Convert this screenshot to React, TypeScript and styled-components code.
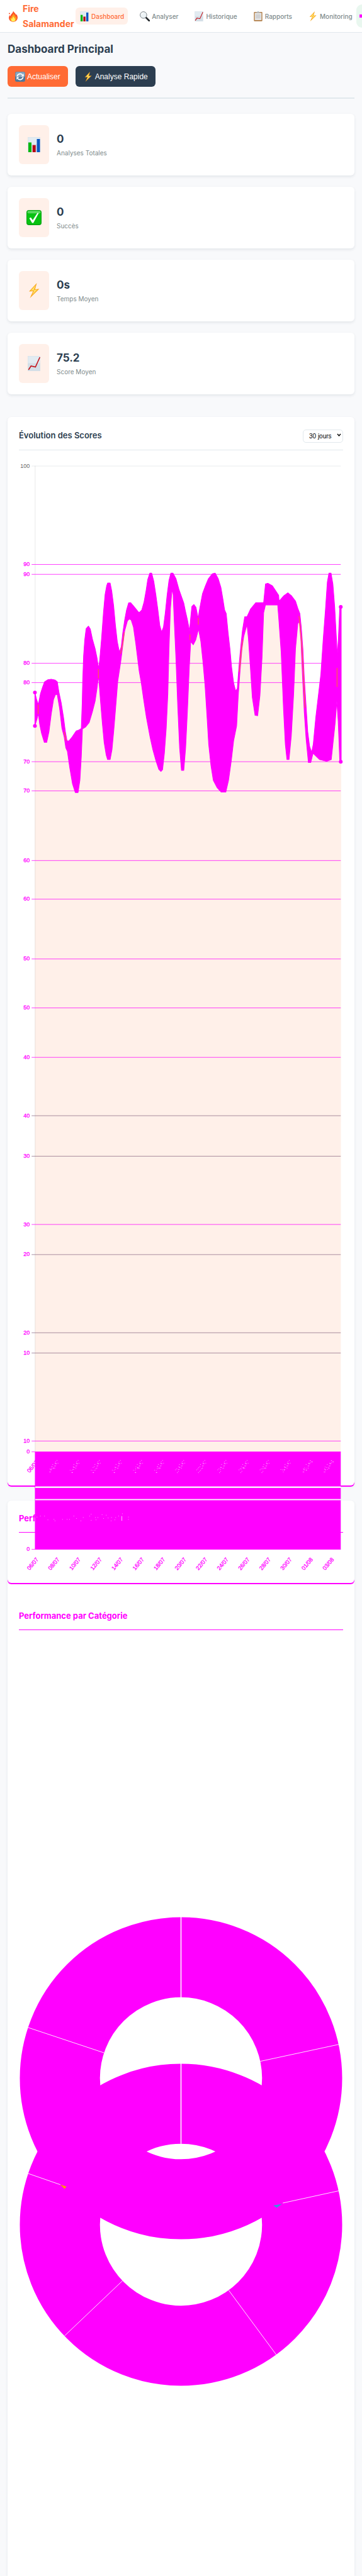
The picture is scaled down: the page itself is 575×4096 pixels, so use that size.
import React from "react";
import styled, { createGlobalStyle } from "styled-components";

const MAGENTA = "#ff00ff";
const ORANGE = "#ff6b35";
const NAVY = "#2c3e50";
const GREY = "#7f8c8d";
const PEACH = "#fff0e9";
const LINE = "#e1e8ed";

const GlobalStyle = createGlobalStyle`
  *, *::before, *::after { box-sizing: border-box; }
  body {
    margin: 0;
    background: #f8f9fb;
    color: ${NAVY};
    font-family: Inter, "Liberation Sans", sans-serif;
  }
`;

const Page = styled.div`
  min-height: 100vh;
  display: flex;
  flex-direction: column;
`;

const Header = styled.header`
  display: flex;
  align-items: center;
  height: 52px;
  padding-left: 12px;
  background: #fff;
  border-bottom: 1px solid ${LINE};
`;

const Brand = styled.a`
  flex: 0 0 108px;
  display: flex;
  align-items: center;
  gap: 6px;
  color: ${ORANGE};
  font-size: 14px;
  line-height: 24px;
  font-weight: 700;
  text-decoration: none;

  svg { flex: none; }
`;

const Nav = styled.nav`
  flex: none;
  display: flex;
  gap: 13px;
`;

const NavLink = styled.a<{ $active?: boolean }>`
  display: flex;
  align-items: center;
  gap: 3px;
  height: 27px;
  padding: 0 6px;
  border-radius: 6px;
  background: ${(p) => (p.$active ? PEACH : "transparent")};
  color: ${(p) => (p.$active ? ORANGE : GREY)};
  font-size: 10px;
  line-height: 16px;
  font-weight: 500;
  text-decoration: none;
`;

const Status = styled.div`
  flex: 1;
  display: flex;
  align-items: center;
  min-width: 0;
  height: 37px;
  padding-left: 5px;
  overflow: hidden;
  border-radius: 15px 0 0 15px;
  background: #e9f7ef;
`;

const StatusDot = styled.span`
  flex: 0 1 6px;
  height: 5px;
  background: ${MAGENTA};
`;

const Main = styled.main`
  flex: 1;
  display: flex;
  flex-direction: column;
  padding: 12px 12px 0;
`;

const PageHead = styled.section`
  padding-bottom: 17px;
  margin-bottom: 24px;
  border-bottom: 2px solid ${LINE};
`;

const PageTitle = styled.h1`
  margin: 0 0 12px;
  font-size: 17px;
  line-height: 29px;
  font-weight: 700;
`;

const Actions = styled.div`
  display: flex;
  gap: 12px;
`;

const Button = styled.button<{ $dark?: boolean }>`
  display: flex;
  align-items: center;
  gap: 3px;
  height: 33px;
  padding: 0 12px;
  border: 0;
  border-radius: 6px;
  background: ${(p) => (p.$dark ? NAVY : ORANGE)};
  color: #fff;
  font: 500 12px "Liberation Sans", sans-serif;
`;

const Stats = styled.section`
  display: grid;
  gap: 18px;
  margin-bottom: 36px;
`;

const cardShadow = "0 2px 4px rgba(44, 62, 80, 0.1)";

const StatCard = styled.article`
  display: flex;
  gap: 12px;
  height: 98px;
  padding: 18px;
  border-radius: 6px;
  background: #fff;
  box-shadow: ${cardShadow};
`;

const StatIcon = styled.div`
  display: grid;
  place-items: center;
  width: 48px;
  border-radius: 6px;
  background: ${PEACH};
`;

const StatBody = styled.div`
  display: flex;
  flex-direction: column;
  justify-content: center;
  gap: 1px;
`;

const StatValue = styled.strong`
  font-size: 17px;
  line-height: 26px;
  font-weight: 700;
`;

const StatLabel = styled.span`
  color: ${GREY};
  font-size: 10px;
  line-height: 17px;
`;

const ChartCard = styled.section`
  padding: 18px;
  margin-bottom: 24px;
  border-radius: 6px;
  background: #fff;
  box-shadow: 0 2px 0 ${MAGENTA}, ${cardShadow};
`;

const CardHead = styled.div<{ $marked?: boolean }>`
  display: flex;
  align-items: center;
  justify-content: space-between;
  padding-bottom: 12px;
  border-bottom: 1px solid ${(p) => (p.$marked ? MAGENTA : LINE)};
`;

const CardTitle = styled.h2<{ $marked?: boolean }>`
  margin: 0;
  color: ${(p) => (p.$marked ? MAGENTA : NAVY)};
  font-size: 13px;
  line-height: 20px;
  font-weight: ${(p) => (p.$marked ? 700 : 600)};
`;

const SelectBox = styled.div`
  position: relative;
  width: 64px;
  height: 22px;
  padding-bottom: 1px;
`;

const Select = styled.select`
  appearance: none;
  width: 100%;
  height: 21px;
  padding: 0 0 0 9px;
  border: 1px solid ${LINE};
  border-radius: 5px;
  background: #fff;
  color: #000;
  font: 10px "Liberation Sans", sans-serif;
`;

const Chevron = styled.svg`
  position: absolute;
  right: 3px;
  top: 8px;
  pointer-events: none;
`;

/* The plot runs past the foot of its card and over the next one. */
const ScorePlot = styled.svg`
  position: relative;
  z-index: 1;
  display: block;
  width: 100%;
  height: auto;
  margin-bottom: -159px;
  pointer-events: none;
`;

const CategoryCard = styled.section`
  flex: 1;
  border-radius: 6px 6px 0 0;
  background: #fff;
  box-shadow: ${cardShadow};
`;

const GhostPanel = styled.div`
  padding: 18px 18px 80px;
  border-radius: 0 0 6px 6px;
  box-shadow: 0 2px 0 ${MAGENTA};
`;

const CategoryBody = styled.div`
  padding: 42px 18px 0;
`;

const Donuts = styled.svg`
  display: block;
  width: 100%;
  height: auto;
`;

/* ---------- icons ---------- */

type IconProps = { size: number };

const FlameIcon = ({ size }: IconProps) => (
  <svg width={size} height={size} viewBox="0 0 24 24" aria-hidden="true">
    <path d="M12 .5c1.600 3 5.600 5.500 6 8.700.3-.6.6-1.200.5-2.200 2 2.500 3.200 5.800 2.700 8.800-.7 4.800-4.300 7.700-9.200 7.700S3.200 20.600 2.800 15.800c-.2-2.500.7-4.800 2.200-6.800 0 1.300.3 2.200 1 3C6.400 7.500 11.500 5.200 12 .5z" fill="#fb4f26" />
    <path d="M12.500 5c.4 3 4 5 4.600 8.500.5-.5.8-1 .9-1.800 2.800 5.300.2 11.300-6 11.300-5 0-8-4-6.500-8.800.5.900 1 1.400 1.700 1.800C7 12 12.400 9.500 12.500 5z" fill="#ff9a1f" />
    <path d="M12.200 12c.3 2.200 3.900 3.600 3.900 6.900 0 2.400-1.700 4.100-4.100 4.100s-4.300-1.700-4.300-4.100c0-1.500.6-2.500 1.300-3.400.2.9.6 1.400 1.200 1.600.1-2 .9-3.900 2-5.100z" fill="#fff05a" />
    <circle cx="4" cy="6" r="1.300" fill="#fb4f26" />
  </svg>
);

const Sheet = ({ children }: { children: React.ReactNode }) => (
  <>
    <rect x="2" y="0" width="20" height="24" fill="#d4dfe7" />
    <rect x="2.500" y=".5" width="19" height="11" fill="#e2ebf1" />
    {children}
  </>
);

const BarsIcon = ({ size }: IconProps) => (
  <svg width={size} height={size} viewBox="0 0 24 24" aria-hidden="true">
    <Sheet>
      <rect x="3" y="8.500" width="5" height="15.500" fill="#09b80f" />
      <rect x="9.700" y="12.700" width="5" height="11.300" fill="#b80713" />
      <rect x="16.500" y="3" width="5" height="21" fill="#0a57c2" />
    </Sheet>
  </svg>
);

const TrendIcon = ({ size }: IconProps) => (
  <svg width={size} height={size} viewBox="0 0 24 24" aria-hidden="true">
    <Sheet>
      <path d="M3.300 22l4-6 7 1.600L21.300 2" fill="none" stroke="#c4141b" strokeWidth="1.600" />
    </Sheet>
  </svg>
);

const SearchIcon = ({ size }: IconProps) => (
  <svg width={size} height={size} viewBox="0 0 24 24" aria-hidden="true">
    <path d="M14.500 14.500l8 8" stroke="#23272b" strokeWidth="4" strokeLinecap="round" />
    <circle cx="8.800" cy="8.800" r="7.900" fill="#edf3f6" stroke="#7c8489" strokeWidth="1.500" />
    <path d="M4 8a5 5 0 0 1 5-4" fill="none" stroke="#fff" strokeWidth="1.800" />
  </svg>
);

const ClipboardIcon = ({ size }: IconProps) => (
  <svg width={size} height={size} viewBox="0 0 24 24" aria-hidden="true">
    <rect x="2" y="1.500" width="20" height="22" rx="1.500" fill="#b07b43" />
    <rect x="4" y="3.500" width="16" height="17.500" fill="#e3e4e5" />
    <rect x="6.500" y="7" width="11" height="10" fill="#d0d1d3" />
    <path d="M7 3.500c0-1.500 2.500-1.500 3-2.500.5-1.300 3.500-1.300 4 0 .5 1 3 1 3 2.500z" fill="#aab4bb" />
  </svg>
);

const BoltIcon = ({ size }: IconProps) => (
  <svg width={size} height={size} viewBox="0 0 24 24" aria-hidden="true">
    <path d="M16.500 0L4 13.500l6.500-.6L5.500 24 20.500 9.300l-6.700.7z" fill="#f9a61c" />
    <path d="M14.800 3.200L6.800 12.300l5.500-.6-3.500 7.500 8.500-8.700-5.600.6z" fill="#ffe368" />
  </svg>
);

const CheckIcon = ({ size }: IconProps) => (
  <svg width={size} height={size} viewBox="0 0 24 24" aria-hidden="true">
    <rect width="24" height="24" rx="4" fill="#079d10" />
    <rect x=".8" y=".8" width="22.400" height="22" rx="3.500" fill="#08c212" />
    <rect x="1.500" y="1.200" width="21" height="4" rx="2" fill="#59d85f" />
    <path d="M4.500 13l2.500-1.200 3 4.200L17.500 4.500l2 .3L11 20.500H9z" fill="#fff" />
  </svg>
);

const RefreshIcon = ({ size }: IconProps) => (
  <svg width={size} height={size} viewBox="0 0 24 24" aria-hidden="true">
    <rect width="24" height="24" rx="4" fill="#527898" />
    <rect x=".8" y=".8" width="22.400" height="12" rx="3.500" fill="#8aa7bf" />
    <path d="M5 11a7.200 7.200 0 0 1 12.500-3.500M19 13a7.200 7.200 0 0 1-12.500 3.500" fill="none" stroke="#fff" strokeWidth="2.600" />
    <path d="M20.500 5v6.300h-6.300zM3.500 19v-6.300h6.300z" fill="#fff" />
  </svg>
);

/* ---------- score plot ---------- */

const UPPER =
  "151,843 158,880 166,910 175,850 185,810 193,783 208,771 222,769 238,773 248,783 255,840 265,900 275,980 283,1060 290,1110 298,1112 312,1090 330,1056 342,1050 352,1042 356,900 358,780 362,640 367,550 373,488 383,474 391,490 400,545 412,600 420,650 427,710 432,660 440,540 448,400 455,300 462,250 466,235 477,235 484,280 492,360 500,470 508,560 517,618 525,590 532,510 540,440 548,385 557,345 566,344 580,365 602,400 614,385 624,340 633,275 640,215 649,180 657,180 666,225 675,300 684,385 692,470 700,507 708,480 716,400 724,300 732,220 740,180 749,180 762,210 775,270 796,346 803,390 812,440 821,500 826,430 831,365 840,354 849,370 858,430 866,370 877,295 890,250 903,210 920,183 932,180 945,210 957,260 965,320 973,385 980,405 988,510 996,600 1003,700 1012,790 1021,835 1028,820 1035,700 1042,600 1050,500 1060,422 1070,422 1085,380 1108,344 1142,343 1150,240 1160,236 1180,250 1207,303 1209,335 1230,305 1247,289 1262,305 1280,335 1290,375 1299,405 1305,480 1312,600 1318,760 1325,900 1333,1060 1341,1140 1350,1175 1357,1130 1368,980 1380,850 1390,740 1400,550 1410,380 1418,230 1425,180 1434,180 1442,240 1450,370 1458,560 1461,640 1466,540 1472,367 1478,367".split(" ");

const LOWER =
  "151,1028 160,990 166,960 172,1020 180,1070 192,1120 202,1120 212,1060 222,960 232,880 240,855 248,855 258,930 268,1040 278,1090 285,1150 292,1170 302,1260 314,1350 326,1398 338,1398 346,1330 352,1200 357,1045 370,1035 386,1010 400,950 412,890 420,820 427,750 434,870 443,1010 451,1120 460,1190 466,1215 477,1215 485,1160 493,1050 500,940 510,780 523,670 530,600 540,500 552,445 560,435 568,440 578,480 588,570 603,725 612,790 622,880 634,980 650,1090 662,1160 675,1220 688,1270 697,1281 704,1272 712,1180 720,1040 727,850 732,600 738,380 745,270 750,300 756,480 762,650 770,920 778,1150 786,1275 796,1275 804,1150 812,940 820,700 826,560 837,578 848,550 860,490 870,560 879,670 888,800 896,960 904,1130 914,1250 924,1330 940,1370 958,1396 978,1396 990,1330 1002,1220 1012,1110 1025,1028 1032,860 1040,720 1048,600 1056,530 1070,465 1076,540 1084,690 1093,870 1105,970 1116,972 1126,860 1135,650 1142,400 1150,356 1203,357 1208,440 1218,620 1228,930 1236,1130 1243,1215 1252,1215 1262,1080 1272,850 1280,600 1290,460 1297,450 1304,560 1310,740 1318,950 1326,1100 1336,1232 1346,1232 1356,1180 1384,1215 1415,1225 1435,1215 1442,1130 1452,1010 1459,890 1465,1000 1472,1227 1478,1227".split(" ");

const BAND = [...UPPER, ...[...LOWER].reverse()].join(" ");
const AREA = [...LOWER, "1476,5056", "152,5056"].join(" ");

const TICKS: { y: number; label: string; tone?: string }[] = [
  { y: 1200, label: "90" },
  { y: 1221, label: "90" },
  { y: 1410, label: "80" },
  { y: 1451, label: "80" },
  { y: 1619, label: "70" },
  { y: 1681, label: "70" },
  { y: 1829, label: "60" },
  { y: 1911, label: "60" },
  { y: 2038, label: "50" },
  { y: 2142, label: "50" },
  { y: 2247, label: "40" },
  { y: 2371, label: "40", tone: "#8a6a84" },
  { y: 2457, label: "30", tone: "#8a6a84" },
  { y: 2602, label: "30" },
  { y: 2666, label: "20", tone: "#8a6a84" },
  { y: 2832, label: "20", tone: "#8a6a84" },
  { y: 2875, label: "10", tone: "#8a6a84" },
  { y: 3062, label: "10" },
  { y: 3085, label: "0" },
  { y: 3292, label: "0" },
];

const DATES = [
  "06/07", "08/07", "10/07", "12/07", "14/07", "16/07", "18/07", "20/07",
  "22/07", "24/07", "26/07", "28/07", "30/07", "01/08", "03/08",
];

const PlotText = styled.text`
  font-family: "Liberation Sans", sans-serif;
  font-size: 12px;
  text-anchor: end;
`;

const ScoreChart = () => (
  <ScorePlot viewBox="40 958 688 2387" role="img" aria-label="Évolution des scores sur 30 jours">
    <path d="M67 991.500H723" stroke="#e2e5e8" />
    <PlotText x="63" y="995" fill="#666">100</PlotText>

    <g transform="translate(0 1150) scale(0.4898 0.3827)">
      <polygon points={AREA} fill={PEACH} />
    </g>
    <path d="M74.500 991V3085" stroke="#000" strokeOpacity=".12" />
    {TICKS.map((t) => (
      <g key={t.y}>
        <path d={`M67 ${t.y + 0.5}H723`} stroke={t.tone ?? MAGENTA} strokeWidth="1" />
        <PlotText x="63" y={t.y + 4} fill={MAGENTA} stroke={MAGENTA} strokeWidth=".4">
          {t.label}
        </PlotText>
      </g>
    ))}

    <g transform="translate(0 1150) scale(0.4898 0.3827)">
      <polygon points={BAND} fill={MAGENTA} stroke={MAGENTA} strokeWidth="3" strokeLinejoin="round" />
      <path
        d="M165 910V962M278 1060l8 50M426 712V765M522 628l10-60 6-60M823 520v32M859 428v38M1037 730l6-90 8-90M1295 418l12 150 8 200 6 160M1460 706V812"
        fill="none"
        stroke={ORANGE}
        strokeWidth="3"
      />
    </g>
    {[[74, 1472.5], [74, 1543.5], [723, 1290.5], [723, 1619.5]].map(([x, y]) => (
      <circle key={`${x}-${y}`} cx={x} cy={y} r="4" fill={MAGENTA} />
    ))}

    {DATES.map((d, i) => (
      <g key={d} transform={`translate(${79 + i * 44.8} 3105) rotate(-50)`}>
        <PlotText y="4" fill={MAGENTA} stroke={MAGENTA} strokeWidth=".4">{d}</PlotText>
      </g>
    ))}
    <path d="M74 3085H723V3159H74zM74 3162H723V3186H74zM74 3188H723V3293H74z" fill={MAGENTA} />
    <path d="M74 3159h1v3h-1zM74 3186h1v2h-1z" fill={MAGENTA} />
    <path d="M75 3159H723v3H75zM75 3186H723v2H75z" fill="#fbf6fc" />

    {DATES.slice(1).map((d, i) => (
      <g key={d} transform={`translate(${123.8 + i * 44.8} 3105) rotate(-50)`}>
        <PlotText y="4" fill="none" stroke="#fff" strokeWidth=".8" strokeDasharray="1 9">{d}</PlotText>
      </g>
    ))}
    {DATES.map((d, i) => (
      <g key={d} transform={`translate(${79 + i * 44.8} 3312) rotate(-50)`}>
        <PlotText y="4" fill={MAGENTA} stroke={MAGENTA} strokeWidth=".4">{d}</PlotText>
      </g>
    ))}
    <path
      d="M78 3224h1M85 3222h1M94 3222h1M101 3230h1M114 3229h1M116 3232h1M132 3229h1M142 3229h1M147 3229h1M156 3222h1M162 3227h1M171 3232h1M176 3225h1M190 3222h1M193 3218h1M193 3231h1M202 3225h1M207 3225h1M203 3230h1M216 3219h1M219 3227h1M225 3220h1M229 3226h1M236 3225h1M235 3232h1M243 3230h1M245 3225h1M251 3222h1M259 3217h1M272 3224h1M272 3229h1"
      stroke="#fff"
      strokeWidth="1"
    />
    <path d="M258.500 3222v10" stroke="#fff" />
  </ScorePlot>
);

/* ---------- category rings ---------- */

const Ring = ({ cy }: { cy: number }) => (
  <circle cx="384" cy={cy} r="257" fill="none" stroke={MAGENTA} strokeWidth="170" />
);

const CategoryChart = () => (
  <Donuts viewBox="40 3464 688 1700" role="img" aria-label="Performance par catégorie">
    <Ring cy={4416} />
    <Ring cy={4727} />
    <path d="M384 4073V4245M384 4384V4555" stroke="#fff" strokeWidth="2" />
    <path
      d="M59 4308L221 4362M719 4344L552 4380M59 4618L128 4642M719 4655L600 4681M260 4846L137 4963M485 4866L586 5003"
      stroke="#fff"
      strokeWidth="1.200"
      fill="none"
    />
    <path d="M128 4642l13 4-4 5z" fill="#ff9800" />
    <path d="M580 4686l18-3-11 8z" fill="#3498db" />
  </Donuts>
);

const NAV = [
  { label: "Dashboard", Icon: BarsIcon, active: true },
  { label: "Analyser", Icon: SearchIcon },
  { label: "Historique", Icon: TrendIcon },
  { label: "Rapports", Icon: ClipboardIcon },
  { label: "Monitoring", Icon: BoltIcon },
];

const STATS = [
  { value: "0", label: "Analyses Totales", Icon: BarsIcon },
  { value: "0", label: "Succès", Icon: CheckIcon },
  { value: "0s", label: "Temps Moyen", Icon: BoltIcon },
  { value: "75.2", label: "Score Moyen", Icon: TrendIcon },
];

export default function App() {
  return (
    <Page>
      <GlobalStyle />
      <Header>
        <Brand href="#">
          <FlameIcon size={18} />
          <span>Fire Salamander</span>
        </Brand>
        <Nav>
          {NAV.map(({ label, Icon, active }) => (
            <NavLink key={label} href="#" $active={active}>
              <Icon size={16} />
              {label}
            </NavLink>
          ))}
        </Nav>
        <Status>
          <StatusDot />
        </Status>
      </Header>
      <Main>
        <PageHead>
          <PageTitle>Dashboard Principal</PageTitle>
          <Actions>
            <Button type="button">
              <RefreshIcon size={16} />
              Actualiser
            </Button>
            <Button type="button" $dark>
              <BoltIcon size={16} />
              Analyse Rapide
            </Button>
          </Actions>
        </PageHead>
        <Stats>
          {STATS.map(({ value, label, Icon }) => (
            <StatCard key={label}>
              <StatIcon>
                <Icon size={24} />
              </StatIcon>
              <StatBody>
                <StatValue>{value}</StatValue>
                <StatLabel>{label}</StatLabel>
              </StatBody>
            </StatCard>
          ))}
        </Stats>
        <ChartCard>
          <CardHead>
            <CardTitle>Évolution des Scores</CardTitle>
            <SelectBox>
              <Select aria-label="Période" defaultValue="30">
                <option value="7">7 jours</option>
                <option value="30">30 jours</option>
                <option value="90">90 jours</option>
              </Select>
              <Chevron width="7" height="6" viewBox="0 0 7 6" aria-hidden="true">
                <path d="M1 1l2.500 3L6 1" fill="none" stroke="#000" strokeWidth="1.400" />
              </Chevron>
            </SelectBox>
          </CardHead>
          <ScoreChart />
        </ChartCard>
        <CategoryCard>
          <GhostPanel aria-hidden="true">
            <CardHead $marked>
              <CardTitle $marked>Performance par Catégorie</CardTitle>
            </CardHead>
          </GhostPanel>
          <CategoryBody>
            <CardHead $marked>
              <CardTitle $marked>Performance par Catégorie</CardTitle>
            </CardHead>
            <CategoryChart />
          </CategoryBody>
        </CategoryCard>
      </Main>
    </Page>
  );
}
